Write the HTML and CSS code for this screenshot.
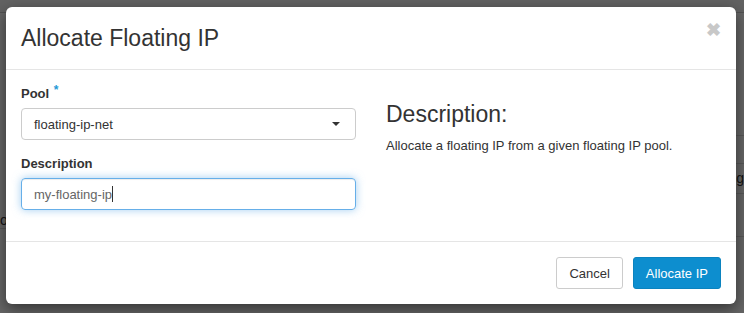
FILE: index.html
```html
<!DOCTYPE html>
<html>
<head>
<meta charset="utf-8">
<link rel="stylesheet" href="styles.css">
</head>
<body>
<div class="page">
  <div class="page-top"></div>
  <div class="page-side left-side">
    <div class="seg s1"></div>
    <div class="seg s2"><span class="pl">o</span></div>
  </div>
  <div class="page-side right-side">
    <div class="seg t1"></div>
    <div class="seg t2"></div>
    <div class="seg t3"><span class="pr">g</span></div>
    <div class="seg t4"></div>
  </div>
</div>
<div class="backdrop"></div>
<div class="modal">
  <div class="modal-header">
    <h3 class="modal-title">Allocate Floating IP</h3>
    <span class="close">&#10006;</span>
  </div>
  <div class="modal-body">
    <div class="col left">
      <div class="form-group">
        <label class="lbl">Pool <span class="req">*</span></label>
        <div class="select">
          <span>floating-ip-net</span>
          <span class="caret"></span>
        </div>
      </div>
      <div class="form-group">
        <label class="lbl">Description</label>
        <div class="input focus"><span class="val">my-floating-ip</span><span class="cursor"></span></div>
      </div>
    </div>
    <div class="col right">
      <h3 class="help-title">Description:</h3>
      <p class="help-text">Allocate a floating IP from a given floating IP pool.</p>
    </div>
  </div>
  <div class="modal-footer">
    <button class="btn btn-default">Cancel</button>
    <button class="btn btn-primary">Allocate IP</button>
  </div>
</div>
</body>
</html>
```
FILE: styles.css
```css
* { box-sizing: border-box; }
html, body { margin: 0; padding: 0; }
body {
  width: 744px;
  height: 313px;
  overflow: hidden;
  position: relative;
  font-family: "Liberation Sans", Arial, sans-serif;
  font-size: 13px;
  color: #333;
  background: #fff;
}
.page { height: 313px; background: #fff; display: flex; flex-wrap: wrap; align-content: flex-start; }
.page-top { width: 100%; height: 13px; border-bottom: 1px solid #ccc; background: #f4f4f4; }
.page-side { display: flex; flex-direction: column; }
.left-side { width: 372px; }
.right-side { width: 372px; align-items: flex-end; }
.seg { width: 100%; border-bottom: 1px solid #ddd; position: relative; }
.s1 { height: 201px; border-bottom: 0; }
.s2 { height: 15px; }
.t1 { height: 123px; }
.t2 { height: 28px; }
.t3 { height: 30px; }
.t4 { height: 43px; }
.pl { position: absolute; left: 0; top: -2px; font-size: 14px; line-height: 16px; color: #333; }
.pr { position: absolute; right: 0; top: 6px; font-size: 14px; line-height: 16px; color: #333; }
.backdrop {
  position: absolute; inset: 0;
  background: rgba(0,0,0,0.6);
}
.modal {
  position: absolute;
  left: 6px; top: 7px;
  width: 730px;
  height: 297px;
  background: #fff;
  border-radius: 6px;
  box-shadow: 0 5px 15px rgba(0,0,0,0.5);
  display: flex;
  flex-direction: column;
}
.modal-header {
  height: 63px;
  padding: 15px;
  border-bottom: 1px solid #e5e5e5;
  display: flex;
  justify-content: space-between;
  align-items: flex-start;
}
.modal-title {
  margin: 0;
  font-size: 23px;
  font-weight: normal;
  line-height: 32px;
  color: #333;
}
.close {
  font-size: 18px;
  font-weight: bold;
  color: #c8c8c8;
  line-height: 16px;
  margin-top: 0px;
  margin-right: 0px;
}
.modal-body {
  display: flex;
  padding: 15px 0;
  height: 172px;
}
.col { width: 365px; padding: 0 15px; }
.form-group { margin-bottom: 15px; }
.lbl {
  display: block;
  font-weight: bold;
  line-height: 18px;
  margin-bottom: 5px;
  position: relative;
}
.req {
  color: #1e9ad6;
  font-size: 12px;
  vertical-align: top;
  position: relative;
  top: -4px;
  left: 1px;
}
.select, .input {
  height: 32px;
  border: 1px solid #ccc;
  border-radius: 4px;
  padding: 0 12px;
  display: flex;
  align-items: center;
  font-size: 13px;
  color: #333;
}
.select { justify-content: space-between; padding-right: 15px; }
.caret {
  width: 0; height: 0;
  border-left: 4px solid transparent;
  border-right: 4px solid transparent;
  border-top: 4px solid #333;
}
.input.focus {
  border-color: #66afe9;
  box-shadow: inset 0 1px 1px rgba(0,0,0,.075), 0 0 8px rgba(102,175,233,.6);
  color: #666;
}
.cursor { display: inline-block; width: 1px; height: 16px; background: #333; margin-left: 0; }
.help-title {
  margin: 16px 0 0;
  font-size: 23px;
  font-weight: normal;
  line-height: 26px;
  color: #333;
}
.help-text { margin: 10px 0 0; line-height: 18px; }
.modal-footer {
  border-top: 1px solid #e5e5e5;
  padding: 15px;
  display: flex;
  justify-content: flex-end;
  gap: 10px;
}
.btn {
  height: 32px;
  padding: 0 12px;
  font-family: "Liberation Sans", Arial, sans-serif;
  font-size: 13px;
  border-radius: 3px;
  border: 1px solid #ccc;
  background: #fff;
  color: #333;
}
.btn-primary {
  background: #0d8ecf;
  border-color: #0b83bf;
  color: #fff;
}
```
